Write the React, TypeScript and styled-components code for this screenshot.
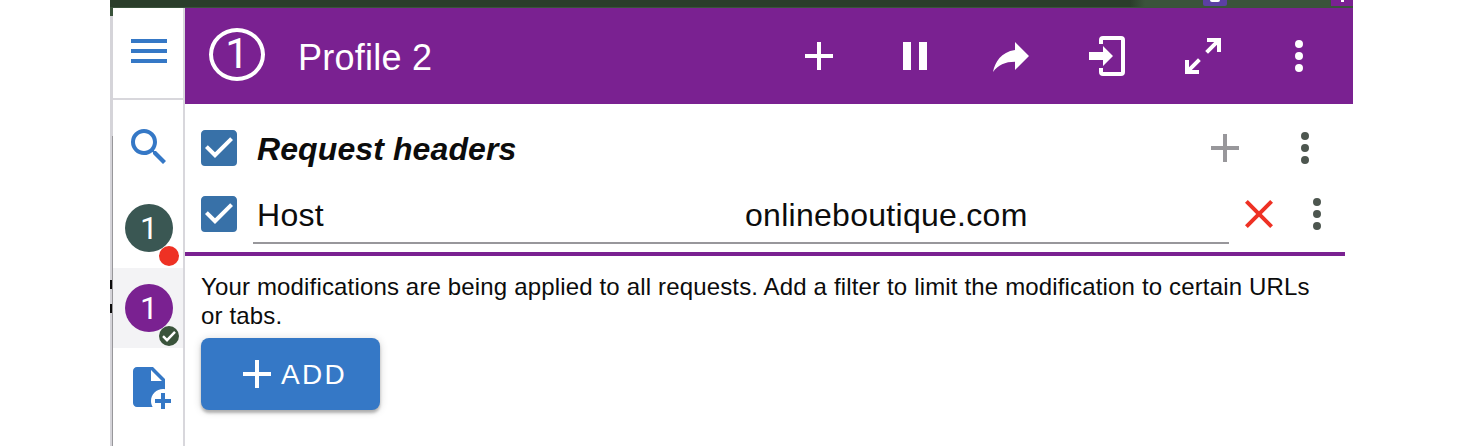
import React from 'react';
import styled, { createGlobalStyle } from 'styled-components';

const GlobalStyle = createGlobalStyle`
  *, *::before, *::after { box-sizing: border-box; }
  body { margin: 0; background: #fff; overflow: hidden; }
`;

const purple = '#7a2191';
const blue = '#3578c6';
const green = '#3a533b';

const paths = {
  menu: 'M3,6H21V8H3V6M3,11H21V13H3V11M3,16H21V18H3V16Z',
  magnify:
    'M9.5,3A6.5,6.5 0 0,1 16,9.5C16,11.11 15.41,12.59 14.44,13.73L14.71,14H15.5L20.5,19L19,20.5L14,15.5V14.71L13.73,14.44C12.59,15.41 11.11,16 9.5,16A6.5,6.5 0 0,1 3,9.5A6.5,6.5 0 0,1 9.5,3M9.5,5C7,5 5,7 5,9.5C5,12 7,14 9.5,14C12,14 14,12 14,9.5C14,7 12,5 9.5,5Z',
  filePlus:
    'M14 2H6C4.89 2 4 2.89 4 4V20C4 21.11 4.89 22 6 22H13.81C13.28 21.09 13 20.05 13 19C13 15.69 15.69 13 19 13C19.34 13 19.67 13.03 20 13.08V8L14 2M13 9V3.5L18.5 9H13M23 20H20V23H18V20H15V18H18V15H20V18H23V20Z',
  plus: 'M19,13H13V19H11V13H5V11H11V5H13V11H19V13Z',
  pause: 'M14,19H18V5H14M6,19H10V5H6V19Z',
  share: 'M21,12L14,5V9C7,10 4,15 3,20C5.5,16.5 9,14.9 14,14.9V19L21,12Z',
  login:
    'M10,17V14H3V10H10V7L15,12L10,17M10,2H19A2,2 0 0,1 21,4V20A2,2 0 0,1 19,22H10A2,2 0 0,1 8,20V18H10V20H19V4H10V6H8V4A2,2 0 0,1 10,2Z',
  expand:
    'M10,21V19H6.41L10.91,14.5L9.5,13.09L5,17.59V14H3V21H10M14.5,10.91L19,6.41V10H21V3H14V5H17.59L13.09,9.5L14.5,10.91Z',
  dots: 'M12,16A2,2 0 0,1 14,18A2,2 0 0,1 12,20A2,2 0 0,1 10,18A2,2 0 0,1 12,16M12,10A2,2 0 0,1 14,12A2,2 0 0,1 12,14A2,2 0 0,1 10,12A2,2 0 0,1 12,10M12,4A2,2 0 0,1 14,6A2,2 0 0,1 12,8A2,2 0 0,1 10,6A2,2 0 0,1 12,4Z',
  close:
    'M19,6.41L17.59,5L12,10.59L6.41,5L5,6.41L10.59,12L5,17.59L6.41,19L12,13.41L17.59,19L19,17.59L13.41,12L19,6.41Z',
  checkbox:
    'M10,17L5,12L6.41,10.58L10,14.17L17.59,6.58L19,8M19,3H5C3.89,3 3,3.89 3,5V19A2,2 0 0,0 5,21H19A2,2 0 0,0 21,19V5C21,3.89 20.1,3 19,3Z',
};

const Svg = styled.svg<{ $color: string }>`
  display: block;
  flex: none;
  width: 48px;
  height: 48px;
  fill: ${(p) => p.$color};
`;

const Icon = ({ name, color }: { name: keyof typeof paths; color: string }) => (
  <Svg viewBox="0 0 24 24" $color={color}>
    <path d={paths[name]} />
  </Svg>
);

const Frame = styled.div`
  display: grid;
  grid-template-rows: 8px 438px;
  width: 1243px;
  height: 446px;
  margin-left: 110px;
  font-family: 'Liberation Sans', Arial, sans-serif;
  color: #0c0c0c;
`;

const TopStrip = styled.div`
  display: flex;
  justify-content: flex-end;
  background: linear-gradient(90deg, #2a3d2a 1020px, ${green} 1035px);
  border-bottom: 1px solid ${green};
`;

const StripBadge = styled.div`
  display: flex;
  justify-content: center;
  width: 24px;
  height: 6px;
  margin-right: 104px;
  border-radius: 0 0 2px 2px;
  background: #5c3fa3;
  &::after {
    content: '';
    width: 10px;
    height: 2px;
    border-radius: 0 0 5px 5px;
    background: #fff;
  }
`;

const StripCorner = styled.div`
  display: flex;
  justify-content: center;
  width: 22px;
  height: 6px;
  background: ${purple};
  &::after {
    content: '';
    width: 3px;
    height: 2px;
    background: #fff;
  }
`;

const Body = styled.div`
  display: grid;
  grid-template-columns: 3px 72px 1168px;
`;

const Edge = styled.div`
  background: linear-gradient(
    ${green} 8px,
    #d5d4d9 8px 272px,
    #0c0c0c 272px 281px,
    #d5d4d9 281px 296px,
    #0c0c0c 296px 305px,
    #d5d4d9 305px
  );
  &::after {
    content: '';
    display: block;
    width: 1px;
    height: 310px;
    margin: 128px 0 0 2px;
    background: #98979b;
  }
`;

const Sidebar = styled.nav`
  display: flex;
  flex-direction: column;
  border-right: 2px solid #d8d7dc;
`;

const SideCell = styled.div<{ $height: number; $top?: number; $bottom?: number; $line?: boolean; $active?: boolean }>`
  display: flex;
  align-items: center;
  justify-content: center;
  padding: ${(p) => p.$top ?? 0}px 0 ${(p) => p.$bottom ?? 0}px 2px;
  height: ${(p) => p.$height}px;
  border-bottom: ${(p) => (p.$line ? '2px solid #d8d7dc' : 'none')};
  background: ${(p) => (p.$active ? '#f3f3f5' : 'transparent')};
`;

const Avatar = styled.div<{ $color: string }>`
  position: relative;
  display: flex;
  align-items: center;
  justify-content: center;
  width: 48px;
  height: 48px;
  border-radius: 50%;
  background: ${(p) => p.$color};
  color: #fff;
  font: 400 32px/48px Roboto, sans-serif;
`;

const Status = styled.span<{ $color: string }>`
  position: absolute;
  right: -6px;
  bottom: -14px;
  width: 20px;
  height: 20px;
  border-radius: 50%;
  background: ${(p) => p.$color};
  svg { display: block; }
`;

const Main = styled.main`
  display: flex;
  flex-direction: column;
`;

const Toolbar = styled.header`
  display: flex;
  align-items: center;
  height: 96px;
  padding: 0 30px 0 24px;
  background: ${purple};
  color: #fff;
`;

const ProfileNumber = styled.div`
  display: flex;
  align-items: center;
  justify-content: center;
  width: 56px;
  height: 53px;
  margin-bottom: 3px;
  padding-bottom: 2px;
  border: 4px solid #fff;
  border-radius: 50%;
  font: 400 42px/43px Roboto, sans-serif;
`;

const Title = styled.h1`
  flex: 1;
  margin: 3px 0 0 33px;
  font-size: 36px;
  font-weight: 400;
  letter-spacing: 0.25px;
`;

const Actions = styled.div`
  display: flex;
  gap: 48px;
`;

const HeaderRow = styled.div<{ $top: number; $right: number }>`
  display: flex;
  align-items: center;
  height: 48px;
  margin-top: ${(p) => p.$top}px;
  padding: 0 ${(p) => p.$right}px 0 10px;
`;

const SectionTitle = styled.h2`
  flex: 1;
  margin: 2px 0 0 14px;
  font-size: 32px;
  font-style: italic;
  font-weight: 700;
  letter-spacing: 0.1px;
`;

const IconGroup = styled.div<{ $gap: number; $offset: number }>`
  display: flex;
  gap: ${(p) => p.$gap}px;
  margin-left: ${(p) => p.$offset}px;
`;

const Fields = styled.div`
  display: grid;
  grid-template-columns: 489px 487px;
  align-items: center;
  width: 976px;
  height: 60px;
  margin-left: 10px;
  padding-top: 3px;
  border-bottom: 2px solid #98979b;
`;

const Field = styled.span<{ $indent: number }>`
  padding-left: ${(p) => p.$indent}px;
  font-size: 32px;
  line-height: 40px;
  letter-spacing: 0.28px;
`;

const Divider = styled.div`
  width: 1160px;
  height: 4px;
  margin-top: 14px;
  background: ${purple};
`;

const Notice = styled.p`
  width: 1128px;
  margin: 16px 0 0 16px;
  font-size: 24px;
  line-height: 29px;
  letter-spacing: 0.157px;
`;

const AddButton = styled.button`
  display: flex;
  align-items: center;
  width: 179px;
  height: 72px;
  margin: 8px 0 0 16px;
  padding: 0 0 0 32px;
  border: 0;
  border-radius: 8px;
  background: ${blue};
  box-shadow: 0 3px 3px rgba(0, 0, 0, 0.25), 0 1px 8px rgba(0, 0, 0, 0.16);
  color: #fff;
  font: 400 28px/40px 'Liberation Sans', Arial, sans-serif;
  letter-spacing: 2.3px;
`;

const ButtonLabel = styled.span`
  padding-top: 2px;
`;

export default function App() {
  return (
    <>
      <GlobalStyle />
      <Frame>
        <TopStrip>
          <StripBadge />
          <StripCorner />
        </TopStrip>
        <Body>
          <Edge />
          <Sidebar>
            <SideCell $height={92} $bottom={4} $line>
              <Icon name="menu" color={blue} />
            </SideCell>
            <SideCell $height={88} $top={6}>
              <Icon name="magnify" color={blue} />
            </SideCell>
            <SideCell $height={80}>
              <Avatar $color="#3a5753">
                1
                <Status $color="#ee3124" />
              </Avatar>
            </SideCell>
            <SideCell $height={80} $active>
              <Avatar $color={purple}>
                1
                <Status $color={green}>
                  <svg width="20" height="20" viewBox="0 0 20 20" fill="none" stroke="#fff" strokeWidth="2.4">
                    <path d="M4 10.2L8 14.2L16 5.8" />
                  </svg>
                </Status>
              </Avatar>
            </SideCell>
            <SideCell $height={78}>
              <Icon name="filePlus" color={blue} />
            </SideCell>
          </Sidebar>
          <Main>
            <Toolbar>
              <ProfileNumber>1</ProfileNumber>
              <Title>Profile 2</Title>
              <Actions>
                <Icon name="plus" color="#fff" />
                <Icon name="pause" color="#fff" />
                <Icon name="share" color="#fff" />
                <Icon name="login" color="#fff" />
                <Icon name="expand" color="#fff" />
                <Icon name="dots" color="#fff" />
              </Actions>
            </Toolbar>
            <HeaderRow $top={20} $right={24}>
              <Icon name="checkbox" color="#3871a8" />
              <SectionTitle>Request headers</SectionTitle>
              <IconGroup $gap={32} $offset={0}>
                <Icon name="plus" color="#98979b" />
                <Icon name="dots" color="#4d564f" />
              </IconGroup>
            </HeaderRow>
            <HeaderRow $top={18} $right={0}>
              <Icon name="checkbox" color="#3871a8" />
              <Fields>
                <Field $indent={4}>Host</Field>
                <Field $indent={3}>onlineboutique.com</Field>
              </Fields>
              <IconGroup $gap={10} $offset={6}>
                <Icon name="close" color="#ee3124" />
                <Icon name="dots" color="#4d564f" />
              </IconGroup>
            </HeaderRow>
            <Divider />
            <Notice>
              Your modifications are being applied to all requests. Add a filter to limit the modification to certain URLs or tabs.
            </Notice>
            <AddButton>
              <Icon name="plus" color="#fff" />
              <ButtonLabel>ADD</ButtonLabel>
            </AddButton>
          </Main>
        </Body>
      </Frame>
    </>
  );
}
